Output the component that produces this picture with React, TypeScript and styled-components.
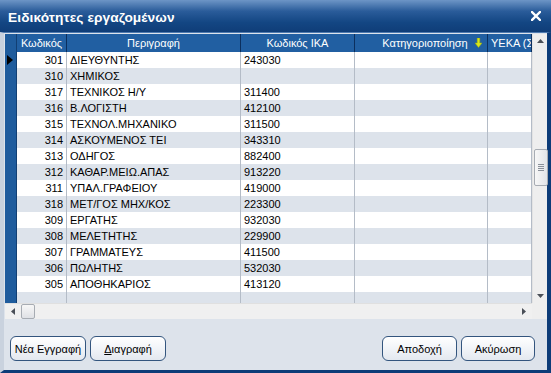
import React from "react";
import styled, { createGlobalStyle } from "styled-components";

const GlobalStyle = createGlobalStyle`
  html, body {
    margin: 0;
    padding: 0;
    background: #ffffff;
  }
  body {
    font-family: "Liberation Sans", Arial, sans-serif;
    font-size: 11px;
  }
`;

const COLS = "12px 50px 174px 114px 133px 44px";

const Window = styled.div`
  width: 551px;
  height: 373px;
  display: flex;
  flex-direction: column;
  overflow: hidden;
`;

const TitleBar = styled.div`
  height: 32px;
  flex: none;
  display: flex;
  align-items: center;
  justify-content: space-between;
  padding: 0 10px 0 8px;
  background: linear-gradient(to bottom, #6d95c6 0%, #2a5c9a 35%, #134683 70%, #0f3d78 100%);
  color: #ffffff;
`;

const Title = styled.span`
  font-size: 13.7px;
  font-weight: bold;
  letter-spacing: 0.1px;
  margin-top: 2px;
`;

const Body = styled.div`
  flex: 1;
  display: flex;
  flex-direction: column;
  background: #dde3eb;
  border-left: 4px solid #c9d2de;
  border-right: 4px solid #0d3c78;
  border-bottom: 3px solid #0d3c78;
  border-top: 1px solid #4f7bb0;
  padding: 1px 0 0 1px;
`;

const Grid = styled.div`
  width: 542px;
  height: 285px;
  display: grid;
  grid-template-columns: 527px 15px;
  grid-template-rows: 269px 16px;
  border-bottom: 1px solid #9aa6b5;
  box-sizing: border-box;
  background: #dde3eb;
`;

const TableArea = styled.div`
  overflow: hidden;
  background: #dde3eb;
  position: relative;
`;

const RowBase = styled.div`
  display: grid;
  grid-template-columns: ${COLS};
`;

const HeaderRow = styled(RowBase)`
  height: 18px;
  background: #215fa2;
  color: #ffffff;
`;

const HeaderCell = styled.div<{ $align?: string }>`
  display: flex;
  align-items: center;
  justify-content: ${(p) => p.$align || "center"};
  padding: 0 3px;
  border-right: 1px solid #0b2f5e;
  white-space: nowrap;
  overflow: hidden;
  font-size: 11px;
  position: relative;
`;

const DataRow = styled(RowBase)<{ $alt: boolean }>`
  height: 16px;
  background: ${(p) => (p.$alt ? "#dde3eb" : "#ffffff")};
  color: #000000;
`;

const Selector = styled.div`
  background: #1f5c9d;
  border-right: 1px solid #123f73;
  display: flex;
  align-items: center;
  justify-content: flex-start;
  padding-left: 2px;
`;

const Cell = styled.div<{ $align?: string }>`
  display: flex;
  align-items: center;
  justify-content: ${(p) => p.$align || "flex-start"};
  padding: 0 3px;
  border-right: 1px solid #b4bcc7;
  white-space: nowrap;
  overflow: hidden;
  font-size: 11px;
`;

const VScroll = styled.div`
  background: #eeeeee;
  border-left: 1px solid #e3e3e3;
  display: flex;
  flex-direction: column;
  align-items: center;
`;

const ArrowBox = styled.div<{ $h?: number }>`
  height: ${(p) => p.$h || 16}px;
  width: 100%;
  display: flex;
  align-items: center;
  justify-content: center;
  flex: none;
`;

const VTrack = styled.div`
  flex: 1;
  width: 100%;
  display: flex;
  flex-direction: column;
`;

const VThumb = styled.div`
  margin-top: 101px;
  height: 35px;
  margin-left: 1px;
  width: 12px;
  border: 1px solid #a7acb3;
  border-radius: 2px;
  background: linear-gradient(to right, #f7f7f7, #e2e4e8);
  display: flex;
  flex-direction: column;
  align-items: center;
  justify-content: center;
  gap: 1px;
`;

const Grip = styled.div`
  width: 6px;
  height: 1px;
  background: #8a9099;
`;

const HScroll = styled.div`
  background: #f0f0f0;
  border-top: 1px solid #e0e0e0;
  display: flex;
  align-items: center;
`;

const HThumb = styled.div`
  width: 12px;
  height: 13px;
  border: 1px solid #a7acb3;
  border-radius: 2px;
  background: linear-gradient(to bottom, #f7f7f7, #dfe1e5);
`;

const Spacer = styled.div`
  flex: 1;
`;

const Corner = styled.div`
  background: #eeeeee;
`;

const Footer = styled.div`
  flex: 1;
  display: flex;
  align-items: flex-start;
  justify-content: space-between;
  padding: 17px 12px 0 5px;
`;

const ButtonGroup = styled.div`
  display: flex;
  gap: 4px;
`;

const Button = styled.button<{ $w: number }>`
  width: ${(p) => p.$w}px;
  height: 25px;
  border: 1px solid #33557e;
  border-radius: 6px;
  background: linear-gradient(to bottom, #ffffff 0%, #f1f4f8 50%, #e3e8ef 100%);
  font-family: "Liberation Sans", Arial, sans-serif;
  font-size: 11px;
  color: #000000;
  padding: 0;
  cursor: pointer;
`;

const Mnemonic = styled.span`
  text-decoration: underline;
`;

const SortLabel = styled.span`
  margin-left: 8px;
`;

const SortMark = styled.span`
  position: absolute;
  right: 5px;
  top: 4px;
`;

const data: [string, string, string][] = [
  ["301", "ΔΙΕΥΘΥΝΤΗΣ", "243030"],
  ["310", "ΧΗΜΙΚΟΣ", ""],
  ["317", "ΤΕΧΝΙΚΟΣ Η/Υ", "311400"],
  ["316", "Β.ΛΟΓΙΣΤΗ", "412100"],
  ["315", "ΤΕΧΝΟΛ.ΜΗΧΑΝΙΚΟ", "311500"],
  ["314", "ΑΣΚΟΥΜΕΝΟΣ ΤΕΙ", "343310"],
  ["313", "ΟΔΗΓΟΣ", "882400"],
  ["312", "ΚΑΘΑΡ.ΜΕΙΩ.ΑΠΑΣ", "913220"],
  ["311", "ΥΠΑΛ.ΓΡΑΦΕΙΟΥ", "419000"],
  ["318", "ΜΕΤ/ΓΟΣ ΜΗΧ/ΚΟΣ", "223300"],
  ["309", "ΕΡΓΑΤΗΣ", "932030"],
  ["308", "ΜΕΛΕΤΗΤΗΣ", "229900"],
  ["307", "ΓΡΑΜΜΑΤΕΥΣ", "411500"],
  ["306", "ΠΩΛΗΤΗΣ", "532030"],
  ["305", "ΑΠΟΘΗΚΑΡΙΟΣ", "413120"],
];

const CloseIcon = () => (
  <svg width="10" height="10" viewBox="0 0 10 10">
    <path d="M1 1 L9 9 M9 1 L1 9" stroke="#ffffff" strokeWidth="2.4" strokeLinecap="square" />
  </svg>
);

const RowPointer = () => (
  <svg width="6" height="10" viewBox="0 0 6 10">
    <path d="M0 0 L6 5 L0 10 Z" fill="#000000" />
  </svg>
);

const SortArrow = () => (
  <svg width="7" height="10" viewBox="0 0 7 10">
    <path d="M2.2 0 H4.8 V5 H7 L3.5 9.5 L0 5 H2.2 Z" fill="#d8e81a" stroke="#9aa80c" strokeWidth="0.5" />
  </svg>
);

const Chevron = ({ dir }: { dir: "up" | "down" | "left" | "right" }) => {
  const paths = {
    up: "M0 4 L3.5 0 L7 4 Z",
    down: "M0 0 L7 0 L3.5 4 Z",
    left: "M4 0 L4 7 L0 3.5 Z",
    right: "M0 0 L4 3.5 L0 7 Z",
  };
  const vertical = dir === "up" || dir === "down";
  return (
    <svg width={vertical ? 7 : 4} height={vertical ? 4 : 7} viewBox={vertical ? "0 0 7 4" : "0 0 4 7"}>
      <path d={paths[dir]} fill="#4a4f57" />
    </svg>
  );
};

export default function App() {
  return (
    <>
      <GlobalStyle />
      <Window>
        <TitleBar>
          <Title>Ειδικότητες εργαζομένων</Title>
          <CloseIcon />
        </TitleBar>
        <Body>
          <Grid>
            <TableArea>
              <HeaderRow>
                <Selector />
                <HeaderCell>Κωδικός</HeaderCell>
                <HeaderCell>Περιγραφή</HeaderCell>
                <HeaderCell>Κωδικός ΙΚΑ</HeaderCell>
                <HeaderCell>
                  <SortLabel>Κατηγοριοποίηση</SortLabel>
                  <SortMark>
                    <SortArrow />
                  </SortMark>
                </HeaderCell>
                <HeaderCell $align="flex-start">ΥΕΚΑ (Σ</HeaderCell>
              </HeaderRow>
              {data.map(([code, desc, ika], i) => (
                <DataRow key={code} $alt={i % 2 === 1}>
                  <Selector>{i === 0 && <RowPointer />}</Selector>
                  <Cell $align="flex-end">{code}</Cell>
                  <Cell>{desc}</Cell>
                  <Cell>{ika}</Cell>
                  <Cell />
                  <Cell />
                </DataRow>
              ))}
              <DataRow $alt={true}>
                <Selector />
                <Cell />
                <Cell />
                <Cell />
                <Cell />
                <Cell />
              </DataRow>
            </TableArea>
            <VScroll>
              <ArrowBox $h={14}>
                <Chevron dir="up" />
              </ArrowBox>
              <VTrack>
                <VThumb>
                  <Grip />
                  <Grip />
                  <Grip />
                  <Grip />
                </VThumb>
              </VTrack>
              <ArrowBox $h={14}>
                <Chevron dir="down" />
              </ArrowBox>
            </VScroll>
            <HScroll>
              <ArrowBox style={{ width: 16 }}>
                <Chevron dir="left" />
              </ArrowBox>
              <HThumb />
              <Spacer />
              <ArrowBox style={{ width: 16 }}>
                <Chevron dir="right" />
              </ArrowBox>
            </HScroll>
            <Corner />
          </Grid>
          <Footer>
            <ButtonGroup>
              <Button $w={76}>Νέα Εγγραφή</Button>
              <Button $w={76}>
                <Mnemonic>Δ</Mnemonic>ιαγραφή
              </Button>
            </ButtonGroup>
            <ButtonGroup>
              <Button $w={75}>Αποδοχή</Button>
              <Button $w={74}>Ακύρωση</Button>
            </ButtonGroup>
          </Footer>
        </Body>
      </Window>
    </>
  );
}
